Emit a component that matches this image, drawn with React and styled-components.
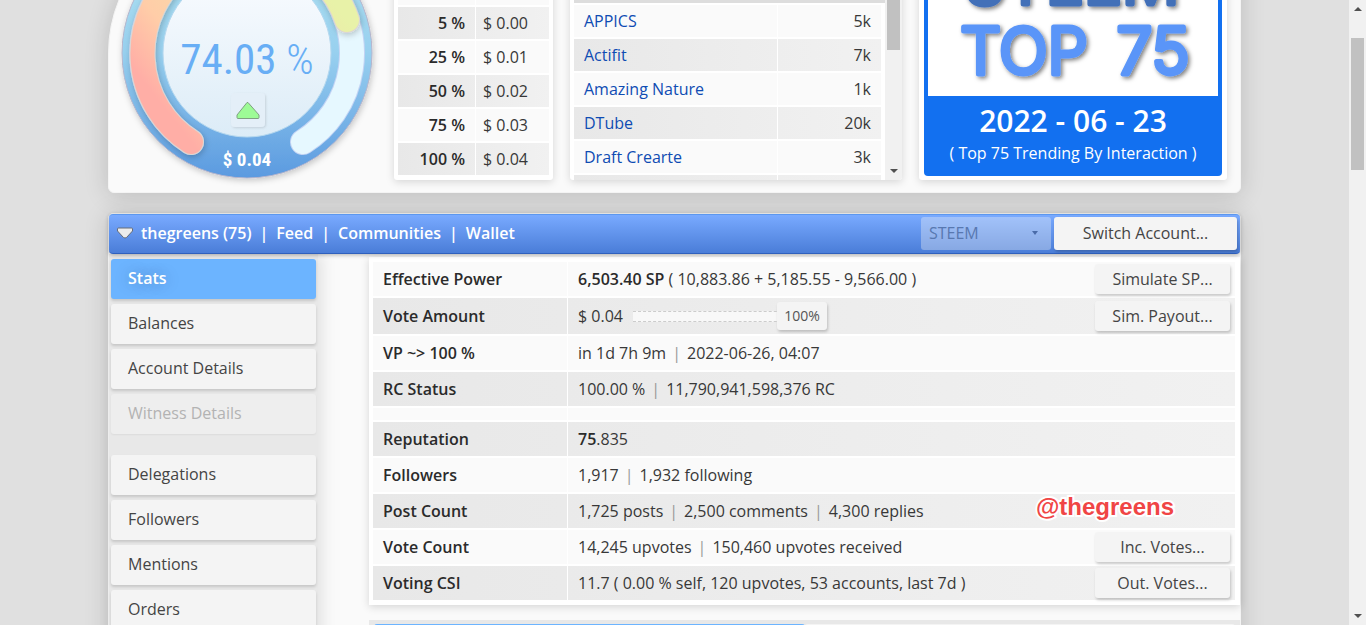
import React, { useState } from "react";
import styled, { createGlobalStyle, css } from "styled-components";

const GlobalStyle = createGlobalStyle`
    * {
        box-sizing: border-box;
    }

    body {
        margin: 0;
        background: #e0e0e0;
        color: #383838;
        font: 400 16px/22px "Open Sans", "Noto Sans", sans-serif;
    }

    button,
    select,
    input {
        font: inherit;
        color: inherit;
    }
`;

const condensed = `"Roboto Condensed", "Open Sans Condensed", "Liberation Sans Narrow", "DejaVu Sans Condensed", sans-serif`;

const Screen = styled.div`
    display: flex;
    height: 100vh;
    overflow: hidden;
`;

const Page = styled.main`
    flex: 1;
    min-width: 0;
    padding: 0 16px;
    overflow: hidden;
`;

const Column = styled.div`
    display: flex;
    flex-direction: column;
    gap: 20px;
    max-width: 1133px;
    margin: -87px auto 0;
`;

const panel = css`
    border: 1px solid #f4f4f4;
    background: #fafafa;
    box-shadow: 0 2px 24px rgba(0, 0, 0, 0.16);
`;

const TopPanel = styled.section`
    ${panel}
    display: flex;
    align-items: flex-end;
    gap: 17px;
    padding: 14px 13px 12px 13px;
    border-radius: 140px 6px 6px 6px;
`;

const GaugeBox = styled.div`
    flex: none;
    width: 255px;
    height: 252px;

    svg {
        display: block;
        overflow: visible;
    }
`;

const Card = styled.div`
    padding: 4px;
    border-radius: 3px;
    background: #fff;
    box-shadow: 0 2px 8px rgba(0, 0, 0, 0.15);
`;

const PercentCard = styled(Card)`
    flex: none;
    width: 159px;
    padding-bottom: 3px;
`;

const AppsCard = styled(Card)`
    display: flex;
    flex: 1;
    height: 240px;
    padding: 0 0 0 4px;
    overflow: hidden;
    align-items: flex-end;
`;

const AppsList = styled.div`
    flex: 1;
    height: 180px;
    padding-right: 4px;
    border-top: 3px solid #ddd;
    overflow: hidden;
`;

const Grid = styled.table`
    width: 100%;
    table-layout: fixed;
    border-collapse: separate;
    border-spacing: 0 2px;

    tr:nth-child(even) {
        background: linear-gradient(90deg, #e8e8e8, #f1f1f1);
    }

    tr:nth-child(odd) {
        background: #fafafa;
    }
`;

const Cell = styled.td`
    height: ${(p) => p.$height || 32}px;
    padding: 0 ${(p) => p.$pad || 10}px;
    text-align: ${(p) => p.$align || "left"};
    font-weight: 400;
    white-space: nowrap;

    & + & {
        border-left: 1px solid #fff;
    }
`;

const HeadCell = styled(Cell).attrs({ as: "th", scope: "row" })`
    color: #2b2b2b;
    font-weight: 600;

    & + td {
        border-left: 1px solid #fff;
    }
`;

const Strong = styled.strong`
    color: #2b2b2b;
    font-weight: 600;
`;

const AppLink = styled.a`
    color: #0f4cb3;
    text-decoration: none;
`;

const AwardCard = styled(Card)`
    flex: none;
    width: 308px;
    padding: 5px 5px 4px;
`;

const Award = styled.figure`
    margin: 0;
    padding: 4px 4px 0;
    border-radius: 4px;
    background: #1270f0;
    color: #fff;
    text-align: center;

    svg {
        display: block;
        width: 100%;
        background: #fff;
    }
`;

const AwardCaption = styled.figcaption`
    height: 80px;
    padding-top: 4px;

    strong {
        display: block;
        font-size: 30px;
        font-weight: 600;
        line-height: 42px;
    }
`;

const AccountPanel = styled.section`
    ${panel}
    border-radius: 5px;
`;

const AccountBar = styled.header`
    display: flex;
    align-items: center;
    gap: 3px;
    height: 40px;
    padding: 0 3px 2px 8px;
    border-top: 1px solid #5c97ee;
    border-bottom: 1px solid #2f60bd;
    border-radius: 4px;
    background: linear-gradient(#79aaff, #4a7dd8);
    box-shadow: 0 1px 4px rgba(0, 0, 0, 0.3);
    color: #fff;
    font-weight: 600;
    position: relative;
`;

const AccountNav = styled.nav`
    display: flex;
    flex: 1;
    align-items: center;

    svg {
        margin-right: 8px;
    }

    a {
        color: inherit;
        text-decoration: none;
    }
`;

const Sep = styled.span`
    margin: 0 ${(p) => p.$space || 6}px;
    color: ${(p) => p.$color || "#999"};
`;

const ChainSelect = styled.select`
    width: 130px;
    height: 33px;
    padding: 0 14px 0 8px;
    border: 0;
    border-radius: 3px;
    appearance: none;
    background: rgba(244, 244, 244, 0.35);
    color: #5878b0;
    font-weight: 400;
    opacity: 1;
`;

const ChainField = styled.label`
    position: relative;

    &::after {
        content: "";
        position: absolute;
        top: 14px;
        right: 13px;
        border: 3px solid transparent;
        border-top: 4px solid #4a6ba8;
        border-bottom: 0;
    }
`;

const Button = styled.button`
    width: ${(p) => p.$width || 135}px;
    height: ${(p) => p.$height || 30}px;
    padding: 0;
    border: 0;
    border-radius: 3px;
    background: #f4f4f4;
    box-shadow: 1px 2px 3px rgba(0, 0, 0, 0.2);
    color: #444;
    font-weight: 400;
    vertical-align: middle;
`;

const Body = styled.div`
    display: flex;
`;

const Sidebar = styled.nav`
    display: flex;
    flex: none;
    flex-direction: column;
    gap: 5px;
    width: 209px;
    padding: 5px 2px;
    background: #e8e8e8;
    box-shadow: 4px 0 14px rgba(0, 0, 0, 0.1);
`;

const MenuGroup = styled.div`
    display: flex;
    flex-direction: column;
    gap: 5px;

    & + & {
        margin-top: 16px;
    }
`;

const MenuItem = styled.button`
    height: 40px;
    padding: 0 17px 2px;
    border: 0;
    border-radius: 3px;
    background: ${(p) => (p.$active ? "#6cb4ff" : "#f4f4f4")};
    box-shadow: 0 2px 3px rgba(0, 0, 0, 0.15);
    color: ${(p) => (p.$active ? "#fff" : "#444")};
    font-weight: ${(p) => (p.$active ? 600 : 400)};
    text-align: left;
    text-shadow: ${(p) => (p.$active ? "0 0 16px rgba(0, 0, 0, 0.3)" : "none")};

    &:disabled {
        background: #eee;
        box-shadow: 0 1px 2px rgba(0, 0, 0, 0.06);
        color: #b3b3b3;
    }
`;

const Content = styled.div`
    flex: 1;
    min-width: 0;
    padding: 3px 0 0 51px;
`;

const StatsCard = styled.div`
    padding: 3px 5px 3px 4px;
    background: #fff;
    box-shadow: 0 2px 8px rgba(0, 0, 0, 0.15);
`;

const ActionCell = styled(Cell)`
    && {
        border-left: 0;
    }
`;

const VoteAmount = styled.div`
    display: flex;
    align-items: center;
    gap: 10px;
`;

const SliderBox = styled.div`
    position: relative;
    width: 194px;
    height: 28px;

    output {
        position: absolute;
        top: 0;
        right: 0;
        width: 50px;
        color: #555;
        font-size: 14px;
        line-height: 28px;
        text-align: center;
        pointer-events: none;
    }
`;

const Slider = styled.input`
    display: block;
    width: 100%;
    height: 28px;
    margin: 0;
    appearance: none;
    background: transparent;

    &::-webkit-slider-runnable-track {
        height: 11px;
        border: dashed #ccc;
        border-width: 1px 0;
        background: #f8f8f8;
    }

    &::-webkit-slider-thumb {
        width: 50px;
        height: 28px;
        margin-top: -10px;
        appearance: none;
        border-radius: 3px;
        background: #f4f4f4;
        box-shadow: 1px 2px 3px rgba(0, 0, 0, 0.2);
    }
`;

const Watermark = styled.span`
    position: absolute;
    right: 61px;
    top: 0;
    color: #f04545;
    font: 700 24px/26px "Liberation Sans", Arial, sans-serif;
    paint-order: stroke fill;
    -webkit-text-stroke: 4px #fff;
`;

const WatermarkCell = styled(ActionCell)`
    position: relative;
`;

const NextSection = styled.div`
    display: flex;
    height: 60px;
    margin-top: 15px;
    padding: 4px 5px;
    background: #e8e8e8;
`;

const NextTab = styled.div`
    flex: 1;
    border-radius: 3px;
    background: ${(p) => (p.$active ? "#6cb4ff" : "#f4f4f4")};
`;

const ScrollTrack = styled.div`
    display: flex;
    flex: none;
    flex-direction: column;
    align-items: center;
    justify-content: space-between;
    width: 17px;
    height: ${(p) => p.$height || "auto"};
    padding: 7px 0;
    background: #f1f1f1;
`;

const ScrollThumb = styled.div`
    width: 13px;
    height: ${(p) => p.$height}px;
    margin: ${(p) => p.$top}px 0 auto;
    background: #c1c1c1;
`;

const Arrow = styled.span`
    border: 4px solid transparent;
    ${(p) => (p.$up ? "border-bottom" : "border-top")}: 4px solid #505050;
    ${(p) => (p.$up ? "border-top" : "border-bottom")}: 0;
`;

const percents = [
    ["5 %", "$ 0.00"],
    ["25 %", "$ 0.01"],
    ["50 %", "$ 0.02"],
    ["75 %", "$ 0.03"],
    ["100 %", "$ 0.04"],
];

const apps = [
    ["APPICS", "5k"],
    ["Actifit", "7k"],
    ["Amazing Nature", "1k"],
    ["DTube", "20k"],
    ["Draft Crearte", "3k"],
    ["", ""],
];

const menu = [
    ["Stats", "Balances", "Account Details", "Witness Details"],
    ["Delegations", "Followers", "Mentions", "Orders"],
];

const Gauge = () => (
    <GaugeBox>
        <svg width="250" height="250" viewBox="0 0 250 250">
            <defs>
                <linearGradient id="rim" x1="0" y1="0" x2="0" y2="1">
                    <stop offset="0" stopColor="#b4e6f2" />
                    <stop offset="0.5" stopColor="#98d0ef" />
                    <stop offset="1" stopColor="#5b9ae0" />
                </linearGradient>
                <linearGradient id="face" x1="0" y1="0" x2="0" y2="1">
                    <stop offset="0" stopColor="#fafcff" />
                    <stop offset="1" stopColor="#dcecf7" />
                </linearGradient>
                <linearGradient
                    id="power"
                    gradientUnits="userSpaceOnUse"
                    x1="69"
                    y1="214"
                    x2="225"
                    y2="92"
                >
                    <stop offset="0" stopColor="#ffaea6" />
                    <stop offset="0.25" stopColor="#ffcda8" />
                    <stop offset="1" stopColor="#e8f2a8" />
                </linearGradient>
                <filter id="soft" x="-20%" y="-20%" width="140%" height="140%">
                    <feDropShadow
                        dx="1"
                        dy="2"
                        stdDeviation="3"
                        floodOpacity="0.22"
                    />
                </filter>
                <filter id="faint" x="-20%" y="-20%" width="140%" height="140%">
                    <feDropShadow
                        dx="1"
                        dy="1"
                        stdDeviation="1"
                        floodOpacity="0.12"
                    />
                </filter>
            </defs>
            <circle
                cx="125"
                cy="125"
                r="125"
                fill="url(#rim)"
                stroke="#b5b5cc"
                filter="url(#soft)"
            />
            <g fill="none" strokeLinecap="round">
                <path
                    d="M69 214A105 105 0 1 1 181 214"
                    stroke="#c4d4f4"
                    strokeWidth="26"
                />
                <path
                    d="M69 214A105 105 0 1 1 181 214"
                    stroke="#e6f8ff"
                    strokeWidth="24"
                />
                <g filter="url(#soft)">
                    <path
                        d="M69 214A105 105 0 1 1 225 92"
                        stroke="#dcd6d2"
                        strokeWidth="26"
                    />
                    <path
                        d="M69 214A105 105 0 1 1 225 92"
                        stroke="url(#power)"
                        strokeWidth="24"
                    />
                </g>
            </g>
            <circle
                cx="125"
                cy="125"
                r="84"
                fill="url(#face)"
                stroke="#b5d8ef"
            />
            <text
                x="125"
                y="146"
                textAnchor="middle"
                fill="#68aef5"
                fontSize="43"
                fontFamily={condensed}
            >
                74.03<tspan fontWeight="300"> %</tspan>
            </text>
            <rect
                x="109"
                y="165"
                width="34"
                height="34"
                rx="4"
                fill="#e4eff8"
                filter="url(#faint)"
            />
            <path
                d="M126 174.500L137 187V189.500Q137 190.500 136 190.500H116Q115 190.500 115 189.500V187L125 174.500Z"
                fill="#9dfb96"
                stroke="#7fa081"
                strokeLinejoin="round"
            />
            <text
                x="125"
                y="238"
                textAnchor="middle"
                fill="#fff"
                fontSize="19"
                fontWeight="700"
                fontFamily={condensed}
            >
                $ 0.04
            </text>
        </svg>
    </GaugeBox>
);

const AwardLogo = () => (
    <svg viewBox="0 0 290 159">
        <filter id="lift" x="-10%" y="-10%" width="120%" height="130%">
            <feDropShadow dx="2" dy="2" stdDeviation="2" floodOpacity="0.5" />
        </filter>
        <g
            filter="url(#lift)"
            textAnchor="middle"
            fontFamily="Inter, sans-serif"
            fontSize="64"
            fontWeight="300"
            strokeWidth="5"
            strokeLinejoin="round"
        >
            <text x="144" y="67" fill="#426fb8" stroke="#426fb8">
                STEEM
            </text>
            <text x="96" y="137" fill="#5a95f8" stroke="#5a95f8">
                TOP
            </text>
            <text x="225" y="137" fill="#5a95f8" stroke="#5a95f8">
                75
            </text>
        </g>
    </svg>
);

const TopSummary = () => (
    <TopPanel>
        <Gauge />
        <PercentCard>
            <Grid>
                <colgroup>
                    <col width="77" />
                    <col />
                </colgroup>
                <tbody>
                    <tr>
                        <Cell />
                        <Cell />
                    </tr>
                    {percents.map(([percent, value]) => (
                        <tr key={percent}>
                            <HeadCell $align="right">{percent}</HeadCell>
                            <Cell $pad={7}>{value}</Cell>
                        </tr>
                    ))}
                </tbody>
            </Grid>
        </PercentCard>
        <AppsCard>
            <AppsList>
                <Grid>
                    <colgroup>
                        <col />
                        <col width="104" />
                    </colgroup>
                    <tbody>
                        {apps.map(([name, count]) => (
                            <tr key={name}>
                                <Cell>
                                    <AppLink href="#">{name}</AppLink>
                                </Cell>
                                <Cell $align="right">{count}</Cell>
                            </tr>
                        ))}
                    </tbody>
                </Grid>
            </AppsList>
            <ScrollTrack $height="240px">
                <Arrow $up />
                <ScrollThumb $top={6} $height={93} />
                <Arrow />
            </ScrollTrack>
        </AppsCard>
        <AwardCard>
            <Award>
                <AwardLogo />
                <AwardCaption>
                    <strong>2022 - 06 - 23</strong>( Top 75 Trending By
                    Interaction )
                </AwardCaption>
            </Award>
        </AwardCard>
    </TopPanel>
);

const AccountHeader = () => (
    <AccountBar>
        <AccountNav>
            <svg width="16" height="12" viewBox="0 0 16 12">
                <path
                    d="M1.500 1H14.500Q15.500 1 15.500 2V4L9.500 10.500Q8 11.500 6.500 10.500L.5 4V2Q.5 1 1.500 1Z"
                    fill="#ececec"
                    stroke="#666c78"
                />
            </svg>
            <a href="#">thegreens (75)</a>
            <Sep $color="#fff" $space={8}>
                |
            </Sep>
            <a href="#">Feed</a>
            <Sep $color="#fff" $space={8}>
                |
            </Sep>
            <a href="#">Communities</a>
            <Sep $color="#fff" $space={8}>
                |
            </Sep>
            <a href="#">Wallet</a>
        </AccountNav>
        <ChainField>
            <ChainSelect aria-label="Chain" disabled>
                <option>STEEM</option>
            </ChainSelect>
        </ChainField>
        <Button $width={183} $height={33}>
            Switch Account...
        </Button>
    </AccountBar>
);

const VoteSlider = () => {
    const [percent, setPercent] = useState(100);

    return (
        <VoteAmount>
            <span>$ 0.04</span>
            <SliderBox>
                <Slider
                    type="range"
                    id="weight"
                    aria-label="Vote weight"
                    value={percent}
                    onChange={(e) => setPercent(e.target.value)}
                />
                <output htmlFor="weight">{percent}%</output>
            </SliderBox>
        </VoteAmount>
    );
};

const Parts = ({ items }) =>
    items.map((item, index) => (
        <React.Fragment key={item}>
            {index > 0 && <Sep>|</Sep>}
            {item}
        </React.Fragment>
    ));

const StatRow = ({ label, action, height = 34, mark, children }) => (
    <tr>
        <HeadCell $height={height}>{label}</HeadCell>
        <Cell $height={height}>{children}</Cell>
        {mark ? (
            <WatermarkCell>
                <Watermark>{mark}</Watermark>
            </WatermarkCell>
        ) : (
            <ActionCell $height={height} $align="right" $pad={5}>
                {action && <Button>{action}</Button>}
            </ActionCell>
        )}
    </tr>
);

const Stats = () => (
    <StatsCard>
        <Grid>
            <colgroup>
                <col width="194" />
                <col />
                <col width="200" />
            </colgroup>
            <tbody>
                <StatRow label="Effective Power" action="Simulate SP...">
                    <Strong>6,503.40 SP</Strong> ( 10,883.86 + 5,185.55 -
                    9,566.00 )
                </StatRow>
                <StatRow
                    label="Vote Amount"
                    action="Sim. Payout..."
                    height={36}
                >
                    <VoteSlider />
                </StatRow>
                <StatRow label="VP ~> 100 %">
                    <Parts items={["in 1d 7h 9m", "2022-06-26, 04:07"]} />
                </StatRow>
                <StatRow label="RC Status">
                    <Parts items={["100.00 %", "11,790,941,598,376 RC"]} />
                </StatRow>
                <StatRow height={12} />
                <StatRow label="Reputation">
                    <Strong>75</Strong>.835
                </StatRow>
                <StatRow label="Followers">
                    <Parts items={["1,917", "1,932 following"]} />
                </StatRow>
                <StatRow label="Post Count" mark="@thegreens">
                    <Parts
                        items={[
                            "1,725 posts",
                            "2,500 comments",
                            "4,300 replies",
                        ]}
                    />
                </StatRow>
                <StatRow label="Vote Count" action="Inc. Votes...">
                    <Parts
                        items={["14,245 upvotes", "150,460 upvotes received"]}
                    />
                </StatRow>
                <StatRow label="Voting CSI" action="Out. Votes...">
                    11.7 ( 0.00 % self, 120 upvotes, 53 accounts, last 7d )
                </StatRow>
            </tbody>
        </Grid>
    </StatsCard>
);

const App = () => {
    const [active, setActive] = useState("Stats");

    return (
        <Screen>
            <GlobalStyle />
            <Page>
                <Column>
                    <TopSummary />
                    <AccountPanel>
                        <AccountHeader />
                        <Body>
                            <Sidebar>
                                {menu.map((group, index) => (
                                    <MenuGroup key={index}>
                                        {group.map((item) => (
                                            <MenuItem
                                                key={item}
                                                $active={item === active}
                                                disabled={
                                                    item === "Witness Details"
                                                }
                                                onClick={() => setActive(item)}
                                            >
                                                {item}
                                            </MenuItem>
                                        ))}
                                    </MenuGroup>
                                ))}
                            </Sidebar>
                            <Content>
                                <Stats />
                                <NextSection>
                                    <NextTab $active />
                                    <NextTab />
                                </NextSection>
                            </Content>
                        </Body>
                    </AccountPanel>
                </Column>
            </Page>
            <ScrollTrack>
                <Arrow $up />
                <ScrollThumb $top={27} $height={132} />
                <Arrow />
            </ScrollTrack>
        </Screen>
    );
};

export default App;
